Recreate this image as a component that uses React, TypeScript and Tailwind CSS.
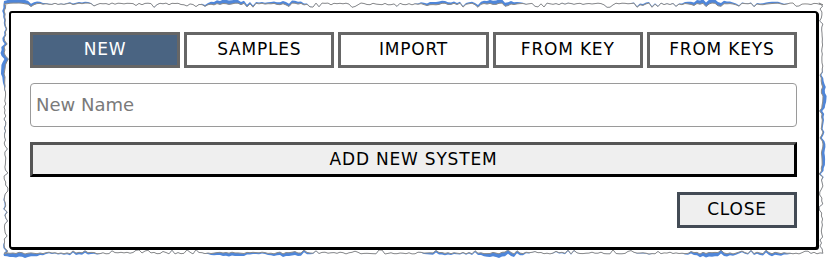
import React from "react";

function mulberry32(a: number) {
  return function () {
    a |= 0;
    a = (a + 0x6d2b79f5) | 0;
    let t = Math.imul(a ^ (a >>> 15), 1 | a);
    t = (t + Math.imul(t ^ (t >>> 7), 61 | t)) ^ t;
    return ((t ^ (t >>> 14)) >>> 0) / 4294967296;
  };
}

type Band = (t: number) => number;

function tornPath(
  seed: number,
  x0: number,
  y0: number,
  x1: number,
  y1: number,
  amp: number,
  band: Band = () => 0
) {
  const r = mulberry32(seed);
  const pts: string[] = [];
  const j = () => {
    const v = r();
    return v > 0.85 ? amp * (1 + r()) : v * amp;
  };
  let s = 0;
  for (let x = x0; x <= x1; x += 3, s += 3) pts.push(`${x},${(y0 + j() - band(s)).toFixed(1)}`);
  for (let y = y0; y <= y1; y += 3, s += 3) pts.push(`${(x1 - j() + band(s)).toFixed(1)},${y}`);
  for (let x = x1; x >= x0; x -= 3, s += 3) pts.push(`${x},${(y1 - j() + band(s)).toFixed(1)}`);
  for (let y = y1; y >= y0; y -= 3, s += 3) pts.push(`${(x0 + j() - band(s)).toFixed(1)},${y}`);
  return "M" + pts.join(" L") + " Z";
}

const blueBand: Band = (s) =>
  Math.max(0, 2.2 * Math.sin(s / 37 + 1.3) + 1.4 * Math.sin(s / 11 + 0.4) + 0.6);

const bluePath = tornPath(13, 4, 3, 823, 254, 2.2, blueBand);
const paperPath = tornPath(13, 4, 3, 823, 254, 2.2);

const tabs = ["NEW", "SAMPLES", "IMPORT", "FROM KEY", "FROM KEYS"];

export default function App() {
  return (
    <div
      className="relative w-[827px] h-[259px] bg-white overflow-hidden"
      style={{ fontFamily: '"DejaVu Sans", "Liberation Sans", sans-serif' }}
    >
      <svg className="absolute inset-0" width="827" height="259" viewBox="0 0 827 259">
        <path d={bluePath} fill="#4f86d9" />
        <path d={paperPath} fill="#ffffff" stroke="#8a8a8a" strokeWidth="1" />
      </svg>
      <div className="relative ml-[9px] mt-[11px] w-[809px] h-[238px] border-2 border-black rounded-[3px] bg-white shadow-[1px_1px_0_#000] p-[19px] flex flex-col gap-[15px]">
        <div className="flex gap-1">
          {tabs.map((t, i) => (
            <button
              key={t}
              className={
                i === 0
                  ? "flex-1 h-[36px] border-[3px] border-[#666666] bg-[#4a6482] text-white text-[17px] tracking-[0.8px] flex items-center justify-center"
                  : "flex-1 h-[36px] border-[3px] border-[#666666] bg-white text-black text-[17px] tracking-[0.8px] flex items-center justify-center"
              }
            >
              {t}
            </button>
          ))}
        </div>
        <input
          placeholder="New Name"
          className="h-[45px] w-full border border-[#9a9a9a] rounded-[4px] px-[5px] text-[18px] text-black placeholder:text-[#7a7a7a] outline-none"
        />
        <button className="h-[36px] w-full border-[3px] border-t-[#555555] border-l-[#555555] border-r-black border-b-black bg-[#efefef] text-black text-[17px] tracking-[0.8px] flex items-center justify-center">
          ADD NEW SYSTEM
        </button>
        <div className="flex justify-end">
          <button className="w-[120px] h-[36px] border-[3px] border-[#434b55] bg-[#efefef] text-black text-[17px] tracking-[0.8px] flex items-center justify-center">
            CLOSE
          </button>
        </div>
      </div>
    </div>
  );
}
